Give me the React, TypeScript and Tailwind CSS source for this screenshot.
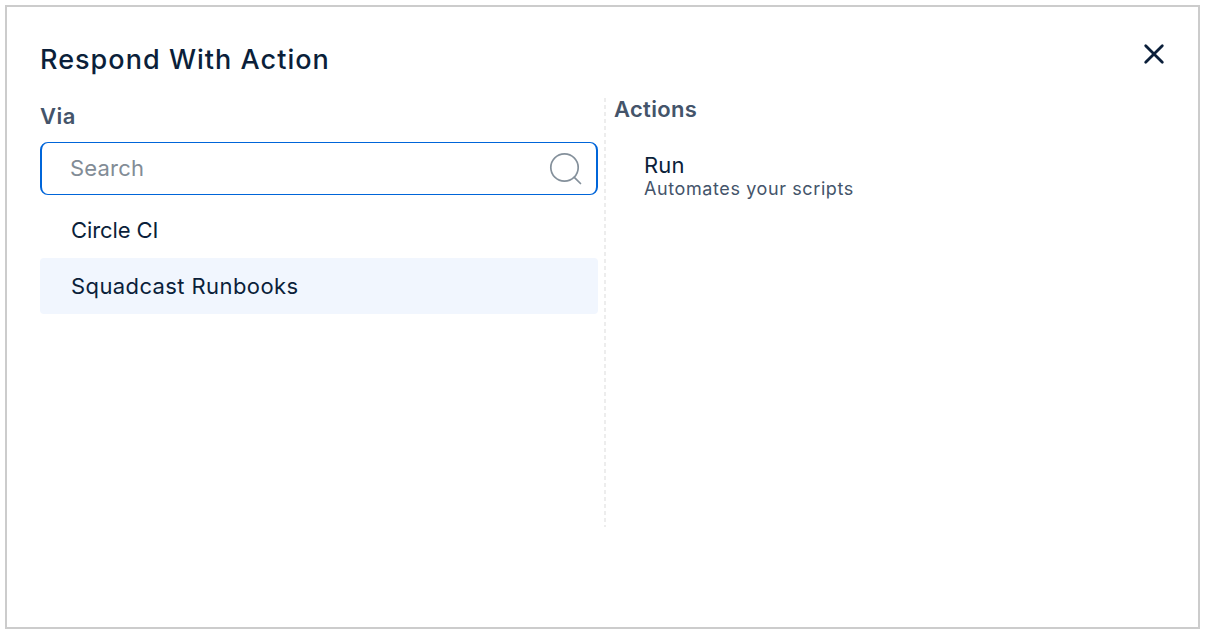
import { useState } from "react";

const sources = [
  { name: "Circle CI", tracking: "tracking-[-0.1px]" },
  { name: "Squadcast Runbooks", tracking: "tracking-[0.4px]" },
];

export default function App() {
  const [query, setQuery] = useState("");
  const [selected, setSelected] = useState("Squadcast Runbooks");

  return (
    <div className="h-[634px] w-[1205px] bg-white p-[5px] font-['Inter',sans-serif] text-[#0b1f3a]">
      <section className="h-[624px] w-[1195px] border-2 border-[#cccccc] pt-[34px] pr-8 pl-[33px]">
        <header className="flex h-[57px] items-start justify-between">
          <h1 className="pt-px text-[27px] leading-9 font-medium tracking-[1.03px] whitespace-nowrap">
            Respond With Action
          </h1>
          <button aria-label="Close" className="mt-px h-6 w-6">
            <svg viewBox="0 0 24 24" className="h-6 w-6" fill="none" stroke="currentColor" strokeWidth="2.8" strokeLinecap="round">
              <path d="M3.7 3.7 20.3 20.3M20.3 3.7 3.7 20.3" />
            </svg>
          </button>
        </header>

        <div className="flex">
          <div className="w-[558px] shrink-0">
            <h2 className="pt-1 text-[22px] leading-7 font-semibold tracking-[0.5px] text-[#44546a]">Via</h2>
            <label className="mt-3 flex h-[53px] items-center rounded-lg border-x-2 border-y-[1.5px] border-[#0065d9] pr-[13px] pl-7">
              <input
                value={query}
                onChange={(e) => setQuery(e.target.value)}
                placeholder="Search"
                className="-mt-px min-w-0 flex-1 text-[22px] leading-7 tracking-[0.2px] outline-none placeholder:text-[#828c96]"
              />
              <svg viewBox="0 0 34 34" className="h-[34px] w-[34px]" fill="none" stroke="#84909b" strokeWidth="1.7" strokeLinecap="round">
                <circle cx="15.5" cy="15.5" r="13.7" />
                <path d="m25.3 25.3 6.2 6.2" />
              </svg>
            </label>
            <ul className="pt-[7px]">
              {sources.map(({ name, tracking }) => (
                <li
                  key={name}
                  onClick={() => setSelected(name)}
                  className={`flex h-14 items-center rounded pl-[31px] text-[22px] leading-7 ${tracking} ${
                    selected === name ? "bg-[#f1f6fe]" : "bg-white"
                  }`}
                >
                  {name}
                </li>
              ))}
            </ul>
          </div>

          <div className="ml-1.5 h-[429px] w-[2px] shrink-0 bg-[repeating-linear-gradient(to_bottom,#ededed_0px,#ededed_4px,transparent_4px,transparent_7px)]" />

          <div className="pl-2">
            <h2 className="-mt-[3px] text-[22px] leading-7 font-semibold tracking-[0.3px] text-[#44546a]">Actions</h2>
            <div className="mt-7 pl-[30px]">
              <div className="text-[22px] leading-7 tracking-[0.2px]">Run</div>
              <div className="-mt-[2px] text-[18px] leading-6 tracking-[0.6px] whitespace-nowrap text-[#44546a]">
                Automates your scripts
              </div>
            </div>
          </div>
        </div>
      </section>
    </div>
  );
}
